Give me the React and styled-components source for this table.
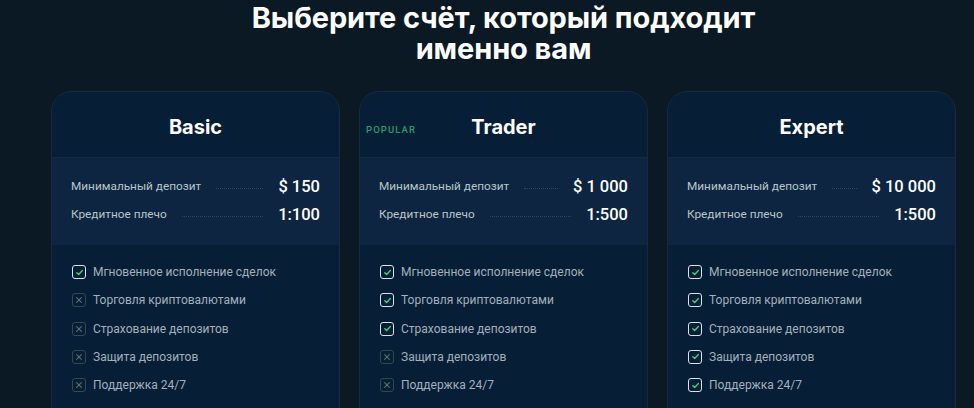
import styled, { createGlobalStyle } from "styled-components";

const Global = createGlobalStyle`
  body {
    margin: 0;
    background: #0a1924;
    font-family: Roboto, "Noto Sans", sans-serif;
    overflow: hidden;
  }
`;

const Page = styled.main`
  width: 905px;
  padding: 2px 0 0 51px;
`;

const Title = styled.h1`
  margin: 0 0 27px;
  text-align: center;
  color: #fff;
  font-family: Inter, "Noto Sans", sans-serif;
  font-size: 29px;
  line-height: 31px;
  font-weight: 700;
  letter-spacing: -0.1px;
`;

const Grid = styled.div`
  display: grid;
  grid-template-columns: repeat(3, 289px);
  gap: 19px;
`;

const Card = styled.article`
  border: 1px solid #17293a;
  border-radius: 20px;
  overflow: hidden;
  background: #071e37;
  height: 340px;
`;

const Header = styled.header`
  position: relative;
  height: 66px;
  padding-top: 5px;
  box-sizing: border-box;
  display: flex;
  align-items: center;
  justify-content: center;
  border-bottom: 1px solid #142a3e;
`;

const Name = styled.h2`
  margin: 0;
  color: #fff;
  font-family: Inter, "Noto Sans", sans-serif;
  font-size: 20px;
  font-weight: 700;
`;

const Badge = styled.span`
  position: absolute;
  left: 6px;
  top: 32px;
  color: #2f9a68;
  font-size: 9.5px;
  font-weight: 500;
  letter-spacing: 1.1px;
`;

const Stats = styled.section`
  background: #0d2540;
  padding: 18px 19px 21px;
  display: flex;
  flex-direction: column;
  gap: 8px;
`;

const StatRow = styled.div`
  display: flex;
  align-items: center;
  height: 20px;
`;

const Label = styled.span`
  color: #b9c5cd;
  font-size: 11.8px;
`;

const Leader = styled.span`
  flex: 1;
  margin: 0 15px;
  border-bottom: 1px dotted #2c4a5e;
  transform: translateY(2px);
`;

const Value = styled.span`
  color: #fff;
  font-size: 16.5px;
  font-weight: 500;
`;

const Features = styled.ul`
  list-style: none;
  margin: 0;
  padding: 18px 20px 17px;
  display: flex;
  flex-direction: column;
  gap: 10.3px;
`;

const Feature = styled.li`
  display: flex;
  align-items: center;
  gap: 7px;
  height: 18px;
  color: #a4b0ba;
  font-size: 12px;
`;

const Box = styled.span`
  width: 12px;
  height: 12px;
  border-radius: 3px;
  border: 1.5px solid ${(p) => (p.$on ? "#dbe3e8" : "#2f4a4a")};
  display: flex;
  align-items: center;
  justify-content: center;
`;

function Mark({ on }) {
  return (
    <Box $on={on}>
      {on ? (
        <svg width="9" height="9" viewBox="0 0 10 10">
          <path d="M2 5.2 4.1 7.2 8.2 2.8" fill="none" stroke="#3fd07e" strokeWidth="1.5" strokeLinecap="round" strokeLinejoin="round" />
        </svg>
      ) : (
        <svg width="8" height="8" viewBox="0 0 10 10">
          <path d="M2 2 8 8M8 2 2 8" fill="none" stroke="#56716b" strokeWidth="1.4" strokeLinecap="round" />
        </svg>
      )}
    </Box>
  );
}

const featureNames = [
  "Мгновенное исполнение сделок",
  "Торговля криптовалютами",
  "Страхование депозитов",
  "Защита депозитов",
  "Поддержка 24/7",
];

const plans = [
  { name: "Basic", deposit: "$ 150", leverage: "1:100", on: 1 },
  { name: "Trader", deposit: "$ 1 000", leverage: "1:500", on: 3, popular: true },
  { name: "Expert", deposit: "$ 10 000", leverage: "1:500", on: 5 },
];

export default function App() {
  return (
    <Page>
      <Global />
      <Title>
        Выберите счёт, который подходит
        <br />
        именно вам
      </Title>
      <Grid>
        {plans.map((p) => (
          <Card key={p.name}>
            <Header>
              {p.popular && <Badge>POPULAR</Badge>}
              <Name>{p.name}</Name>
            </Header>
            <Stats>
              <StatRow>
                <Label>Минимальный депозит</Label>
                <Leader />
                <Value>{p.deposit}</Value>
              </StatRow>
              <StatRow>
                <Label>Кредитное плечо</Label>
                <Leader />
                <Value>{p.leverage}</Value>
              </StatRow>
            </Stats>
            <Features>
              {featureNames.map((f, i) => (
                <Feature key={f}>
                  <Mark on={i < p.on} />
                  {f}
                </Feature>
              ))}
            </Features>
          </Card>
        ))}
      </Grid>
    </Page>
  );
}
